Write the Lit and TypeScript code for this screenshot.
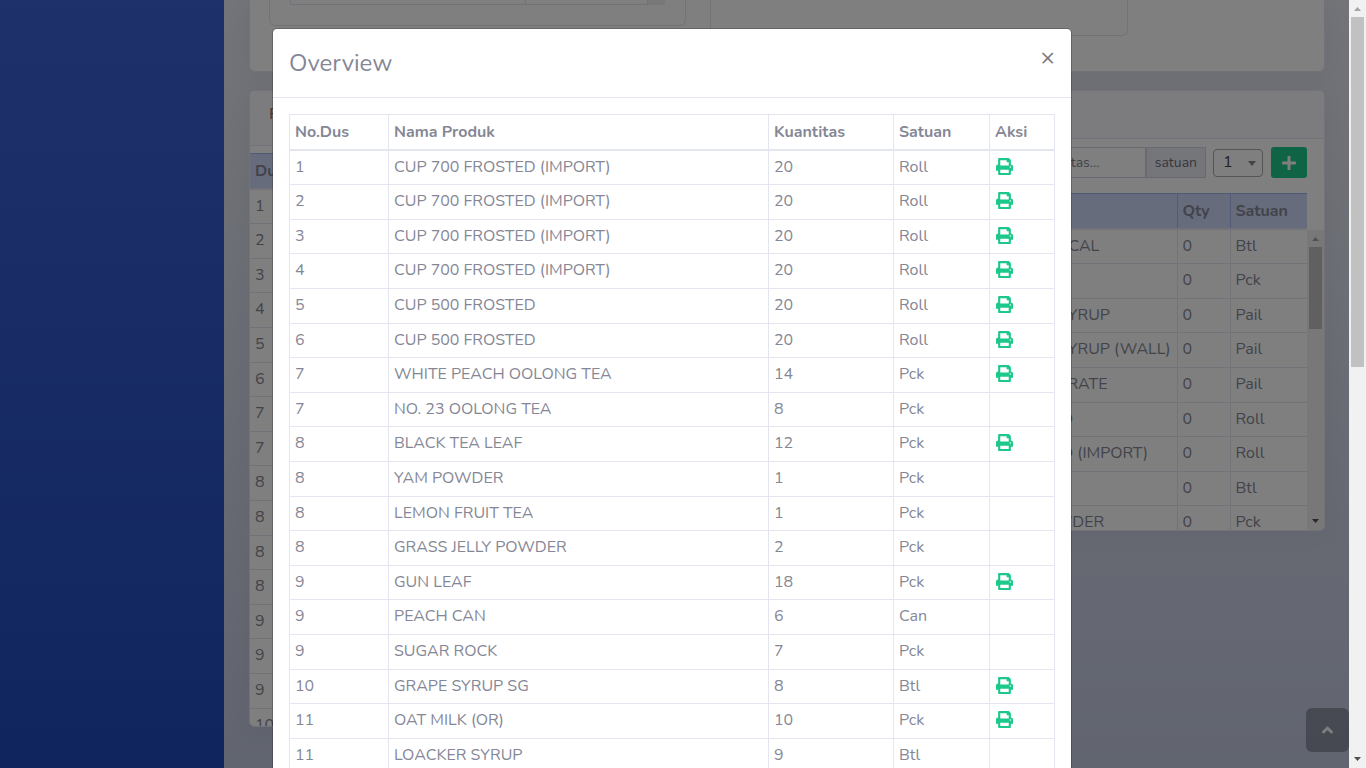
import { LitElement, html, svg, css, nothing } from 'lit';
import { customElement } from 'lit/decorators.js';

interface Item {
  box: number;
  name: string;
  qty: number;
  unit: string;
  first?: boolean;
}

const items: Item[] = [
  { box: 1, name: 'CUP 700 FROSTED (IMPORT)', qty: 20, unit: 'Roll', first: true },
  { box: 2, name: 'CUP 700 FROSTED (IMPORT)', qty: 20, unit: 'Roll', first: true },
  { box: 3, name: 'CUP 700 FROSTED (IMPORT)', qty: 20, unit: 'Roll', first: true },
  { box: 4, name: 'CUP 700 FROSTED (IMPORT)', qty: 20, unit: 'Roll', first: true },
  { box: 5, name: 'CUP 500 FROSTED', qty: 20, unit: 'Roll', first: true },
  { box: 6, name: 'CUP 500 FROSTED', qty: 20, unit: 'Roll', first: true },
  { box: 7, name: 'WHITE PEACH OOLONG TEA', qty: 14, unit: 'Pck', first: true },
  { box: 7, name: 'NO. 23 OOLONG TEA', qty: 8, unit: 'Pck' },
  { box: 8, name: 'BLACK TEA LEAF', qty: 12, unit: 'Pck', first: true },
  { box: 8, name: 'YAM POWDER', qty: 1, unit: 'Pck' },
  { box: 8, name: 'LEMON FRUIT TEA', qty: 1, unit: 'Pck' },
  { box: 8, name: 'GRASS JELLY POWDER', qty: 2, unit: 'Pck' },
  { box: 9, name: 'GUN LEAF', qty: 18, unit: 'Pck', first: true },
  { box: 9, name: 'PEACH CAN', qty: 6, unit: 'Can' },
  { box: 9, name: 'SUGAR ROCK', qty: 7, unit: 'Pck' },
  { box: 10, name: 'GRAPE SYRUP SG', qty: 8, unit: 'Btl', first: true },
  { box: 11, name: 'OAT MILK (OR)', qty: 10, unit: 'Pck', first: true },
  { box: 11, name: 'LOACKER SYRUP', qty: 9, unit: 'Btl' },
];

const stock: [string, string][] = [
  ['ORANGE JUICE LOCAL', 'Btl'],
  ['YAM POWDER', 'Pck'],
  ['BROWN SUGAR SYRUP', 'Pail'],
  ['BROWN SUGAR SYRUP (WALL)', 'Pail'],
  ['LEMON CONCENTRATE', 'Pail'],
  ['CUP 500 FROSTED', 'Roll'],
  ['CUP 700 FROSTED (IMPORT)', 'Roll'],
  ['GRAPE SYRUP', 'Btl'],
  ['GRASS JELLY POWDER', 'Pck'],
];

const printIcon = svg`<svg class="print" viewBox="0 0 512 512" aria-hidden="true"><path d="M448 192V77.25c0-8.49-3.37-16.62-9.37-22.63L393.37 9.37c-6-6-14.14-9.37-22.63-9.37H96C78.33 0 64 14.33 64 32v160c-35.35 0-64 28.65-64 64v112c0 8.84 7.16 16 16 16h48v96c0 17.67 14.33 32 32 32h320c17.67 0 32-14.33 32-32v-96h48c8.84 0 16-7.16 16-16V256c0-35.35-28.65-64-64-64zm-64 256H128v-96h256v96zm0-224H128V64h192v48c0 8.84 7.16 16 16 16h48v96zm48 72c-13.25 0-24-10.75-24-24 0-13.26 10.75-24 24-24s24 10.74 24 24c0 13.25-10.75 24-24 24z"/></svg>`;

@customElement('scroll-track')
export class ScrollTrack extends LitElement {
  static styles = css`
    :host {
      display: flex;
      flex-direction: column;
      flex: none;
      width: 17px;
      background: #f1f1f1;
    }
    .arrow {
      flex: none;
      width: 17px;
      height: 17px;
      fill: #505050;
    }
    .up {
      fill: #a3a3a3;
    }
    .rail {
      flex: 1;
      padding: 0 2px;
    }
    .thumb {
      background: #c1c1c1;
    }
  `;
  static properties = { size: { type: Number } };
  declare size: number;

  render() {
    return html`
      <svg class="arrow up" viewBox="0 0 17 17"><path d="M5 11h7L8.500 7z" /></svg>
      <div class="rail"><div class="thumb" style="height:${this.size}%"></div></div>
      <svg class="arrow" viewBox="0 0 17 17"><path d="M5 6h7L8.500 10z" /></svg>
    `;
  }
}

@customElement('app-root')
export class AppRoot extends LitElement {
  static styles = css`
    :host {
      display: flex;
      position: relative;
      height: 100vh;
      overflow: hidden;
      font: 16px/24px Nunito, 'Open Sans', sans-serif;
      color: #858796;
    }
    *,
    *::before {
      box-sizing: border-box;
    }
    button,
    input,
    select {
      font: inherit;
      color: inherit;
      margin: 0;
    }
    .page {
      position: relative;
      flex: 1;
      min-width: 0;
      display: flex;
      overflow: hidden;
    }
    .sidebar {
      flex: none;
      width: 224px;
      background: linear-gradient(#3e62d4, #2049bc);
    }
    .content {
      flex: 1;
      min-width: 0;
      display: flex;
      flex-direction: column;
      gap: 18px;
      padding: 0 24px 0 25px;
      background: linear-gradient(#e6e9f2, #c3cae0);
    }
    .card {
      background: #fff;
      border: 1px solid #e3e6f0;
      border-radius: 6px;
      box-shadow: 0 2px 28px rgba(58, 59, 69, 0.08);
      overflow: hidden;
    }
    .summary {
      display: flex;
      align-items: flex-start;
      flex: none;
      height: 72px;
      padding: 0 19px;
      border-top: 0;
      border-radius: 0 0 6px 6px;
    }
    .panel {
      flex: 0 1 417px;
      padding: 0 20px 20px;
      border: 1px solid #e3e6f0;
      border-top: 0;
      border-radius: 0 0 6px 6px;
    }
    .strip {
      display: flex;
      height: 5px;
    }
    .strip-a {
      flex: 0 1 236px;
      border: solid #e3e6f0;
      border-width: 0 1px 1px;
    }
    .strip-b {
      flex: 0 1 122px;
      border: solid #e3e6f0;
      border-width: 0 1px 1px 0;
    }
    .strip-end {
      width: 17px;
      background: #f1f1f1;
    }
    .aside {
      flex: 0 1 418px;
      height: 48px;
      margin-left: 24px;
      border-left: 1px solid #e3e6f0;
    }
    .aside-panel {
      height: 36px;
      border: solid #e3e6f0;
      border-width: 0 1px 1px 0;
      border-radius: 0 0 6px 0;
    }
    .columns {
      display: grid;
      grid-template-columns: 1fr 1fr;
      gap: 24px;
      align-items: start;
    }
    .head {
      padding: 11px 19px;
      background: #f8f9fc;
      border-bottom: 1px solid #e3e6f0;
      color: #6e707e;
    }
    .stock .head {
      padding-top: 12px;
    }
    .packed .head {
      padding-bottom: 19px;
      margin-bottom: 7px;
    }
    .packed .window {
      height: 573px;
      overflow: hidden;
    }
    .tools {
      display: flex;
      align-items: center;
      justify-content: flex-end;
      padding: 8px 17px 15px;
      font-size: 14px;
      line-height: 21px;
    }
    .qty {
      width: 124px;
      height: 31px;
      padding: 4px 8px;
      border: 1px solid #d1d3e2;
      border-radius: 3px 0 0 3px;
      background: #fff;
    }
    .qty::placeholder {
      color: #858796;
      opacity: 1;
    }
    .addon {
      height: 31px;
      padding: 4px 8px;
      background: #eaecf4;
      border: 1px solid #d1d3e2;
      margin-right: 7px;
      color: #6e707e;
    }
    .pick {
      position: relative;
      margin-right: 8px;
      font-size: 16px;
    }
    .pick select {
      display: block;
      appearance: none;
      width: 50px;
      height: 28px;
      padding: 0 9px;
      border: 1px solid #aaa;
      border-radius: 4px;
      background: #fff;
      color: #444;
    }
    .pick svg {
      position: absolute;
      right: 7px;
      top: 12px;
      width: 8px;
      height: 5px;
      fill: #888;
    }
    .add {
      display: grid;
      place-items: center;
      width: 36px;
      height: 31px;
      padding: 0;
      border: 0;
      border-radius: 3px;
      background: #1cc88a;
    }
    .add svg {
      width: 14px;
      height: 16px;
      fill: #fff;
    }
    .window {
      display: flex;
      align-items: stretch;
    }
    .stock .window {
      height: 337px;
      overflow: hidden;
    }
    .stock .table {
      align-self: flex-start;
      flex: 1;
    }
    .stock scroll-track {
      margin-top: 37px;
    }
    .table {
      width: 100%;
      border-collapse: collapse;
      table-layout: fixed;
    }
    th,
    td {
      height: 24px;
      padding: 5px;
      border: 1px solid #e3e6f0;
      text-align: left;
      white-space: nowrap;
    }
    th {
      font-weight: 700;
      border-bottom-width: 2px;
    }
    td {
      padding: 4px 5px 6px;
    }
    tr:nth-child(5n + 1) td,
    tr:nth-child(5n + 3) td {
      padding-bottom: 5px;
    }
    .blue th {
      background: #cdd8f6;
      border-color: #a3b6ee;
      border-bottom-color: #e3e6f0;
    }
    .blue tr > :first-child {
      border-left: 0;
    }
    .blue tr > :last-child {
      border-right: 0;
    }
    .to-top {
      position: absolute;
      right: 0;
      bottom: 16px;
      display: grid;
      place-items: center;
      width: 43px;
      height: 44px;
      border-radius: 6px;
      background: rgba(90, 92, 105, 0.5);
    }
    .to-top svg {
      width: 11px;
      height: 18px;
      fill: #fff;
    }
    .backdrop {
      position: absolute;
      inset: 0;
      padding: 28px 5px 0 0;
      background: rgba(0, 0, 0, 0.5);
    }
    .modal {
      max-width: 800px;
      margin: 0 auto;
      background: #fff;
      background-clip: padding-box;
      border: 1px solid rgba(0, 0, 0, 0.2);
      border-radius: 5px;
    }
    .modal-head {
      display: flex;
      align-items: flex-start;
      justify-content: space-between;
      padding: 16px;
      border-bottom: 1px solid #e3e6f0;
    }
    h5 {
      margin: 0;
      font-size: 24px;
      font-weight: 400;
      line-height: 36px;
    }
    .close {
      padding: 0;
      border: 0;
      background: none;
      color: #7a7a7a;
      font-size: 24px;
      font-weight: 500;
      line-height: 24px;
    }
    .modal-body {
      padding: 16px;
    }
    .print-btn {
      display: block;
      padding: 0 1px 2px;
      border: 0;
      background: none;
    }
    .print {
      display: block;
      width: 17px;
      height: 17px;
      fill: #1cc88a;
    }
    .c-no { width: 99px; }
    .c-qty { width: 125px; }
    .c-unit { width: 96px; }
    .c-act { width: 65px; }
    .c-name { width: 251px; }
    .c-stock { width: 53px; }
    .c-sat { width: 77px; }
  `;

  render() {
    return html`
      <div class="page">
        <nav class="sidebar" aria-label="Menu"></nav>
        <main class="content">
          <section class="card summary">
            <div class="panel">
              <div class="strip">
                <div class="strip-a"></div>
                <div class="strip-b"></div>
                <div class="strip-end"></div>
              </div>
            </div>
            <div class="aside"><div class="aside-panel"></div></div>
          </section>
          <div class="columns">
            <section class="card packed">
              <div class="head">Rincian</div>
              <div class="window">
                <table class="table blue">
                  <thead><tr><th class="c-no">Dus</th><th>Nama Produk</th></tr></thead>
                  <tbody>
                    ${items.slice(0, 16).map((i) => html`<tr><td>${i.box}</td><td>${i.name}</td></tr>`)}
                  </tbody>
                </table>
              </div>
            </section>
            <section class="card stock">
              <div class="head">Produk</div>
              <div class="tools">
                <input class="qty" placeholder="Kuantitas..." aria-label="Kuantitas" />
                <span class="addon">satuan</span>
                <div class="pick">
                  <select aria-label="Dus"><option>1</option><option>2</option></select>
                  <svg viewBox="0 0 8 5"><path d="M0 0h8L4 5z" /></svg>
                </div>
                <button class="add" aria-label="Tambah">
                  <svg viewBox="0 0 448 512"><path d="M416 208H272V64c0-17.67-14.33-32-32-32h-32c-17.67 0-32 14.33-32 32v144H32c-17.67 0-32 14.33-32 32v32c0 17.67 14.33 32 32 32h144v144c0 17.67 14.33 32 32 32h32c17.67 0 32-14.33 32-32V304h144c17.67 0 32-14.33 32-32v-32c0-17.67-14.33-32-32-32z" /></svg>
                </button>
              </div>
              <div class="window">
                <table class="table blue">
                  <thead>
                    <tr><th>Kode</th><th class="c-name">Nama</th><th class="c-stock">Qty</th><th class="c-sat">Satuan</th></tr>
                  </thead>
                  <tbody>
                    ${stock.map(([name, unit]) => html`<tr><td></td><td>${name}</td><td>0</td><td>${unit}</td></tr>`)}
                  </tbody>
                </table>
                <scroll-track .size=${31}></scroll-track>
              </div>
            </section>
          </div>
        </main>
        <a class="to-top" href="#top" aria-label="Ke atas">
          <svg viewBox="0 0 320 512"><path d="M177 159.700l136 136c9.400 9.400 9.400 24.600 0 33.900l-22.600 22.600c-9.400 9.400-24.600 9.400-33.900 0L160 255.900l-96.400 96.400c-9.400 9.400-24.600 9.400-33.900 0L7 329.700c-9.400-9.400-9.400-24.600 0-33.900l136-136c9.400-9.500 24.600-9.500 34-.1z" /></svg>
        </a>
        <div class="backdrop">
          <div class="modal" role="dialog" aria-labelledby="title">
            <div class="modal-head">
              <h5 id="title">Overview</h5>
              <button class="close" aria-label="Tutup">×</button>
            </div>
            <div class="modal-body">
              <table class="table">
                <thead>
                  <tr>
                    <th class="c-no">No.Dus</th><th>Nama Produk</th><th class="c-qty">Kuantitas</th>
                    <th class="c-unit">Satuan</th><th class="c-act">Aksi</th>
                  </tr>
                </thead>
                <tbody>
                  ${items.map(
                    (i) => html`<tr>
                      <td>${i.box}</td><td>${i.name}</td><td>${i.qty}</td><td>${i.unit}</td>
                      <td>${i.first ? html`<button class="print-btn" aria-label="Cetak">${printIcon}</button>` : nothing}</td>
                    </tr>`
                  )}
                </tbody>
              </table>
            </div>
          </div>
        </div>
      </div>
      <scroll-track .size=${47.7}></scroll-track>
    `;
  }
}
